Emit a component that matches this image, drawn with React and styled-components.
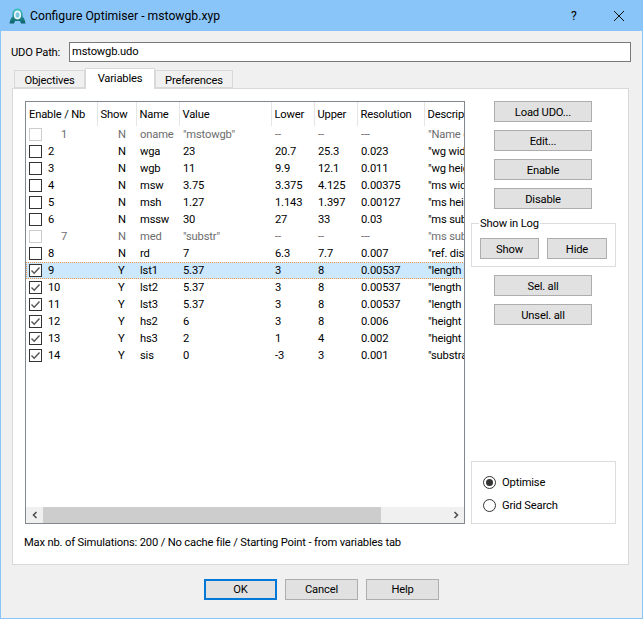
import React from "react";
import styled, { createGlobalStyle } from "styled-components";

const rows = [
  { nb: 1, off: true, show: "N", name: "oname", value: '"mstowgb"', lower: "--", upper: "--", res: "---", desc: '"Name of the model"' },
  { nb: 2, show: "N", name: "wga", value: "23", lower: "20.7", upper: "25.3", res: "0.023", desc: '"wg width port 1"' },
  { nb: 3, show: "N", name: "wgb", value: "11", lower: "9.9", upper: "12.1", res: "0.011", desc: '"wg height port 1"' },
  { nb: 4, show: "N", name: "msw", value: "3.75", lower: "3.375", upper: "4.125", res: "0.00375", desc: '"ms width"' },
  { nb: 5, show: "N", name: "msh", value: "1.27", lower: "1.143", upper: "1.397", res: "0.00127", desc: '"ms height"' },
  { nb: 6, show: "N", name: "mssw", value: "30", lower: "27", upper: "33", res: "0.03", desc: '"ms substrate width"' },
  { nb: 7, off: true, show: "N", name: "med", value: '"substr"', lower: "--", upper: "--", res: "---", desc: '"ms substrate"' },
  { nb: 8, show: "N", name: "rd", value: "7", lower: "6.3", upper: "7.7", res: "0.007", desc: '"ref. distance"' },
  { nb: 9, checked: true, selected: true, show: "Y", name: "lst1", value: "5.37", lower: "3", upper: "8", res: "0.00537", desc: '"length section 1"' },
  { nb: 10, checked: true, show: "Y", name: "lst2", value: "5.37", lower: "3", upper: "8", res: "0.00537", desc: '"length section 2"' },
  { nb: 11, checked: true, show: "Y", name: "lst3", value: "5.37", lower: "3", upper: "8", res: "0.00537", desc: '"length section 3"' },
  { nb: 12, checked: true, show: "Y", name: "hs2", value: "6", lower: "3", upper: "8", res: "0.006", desc: '"height step 2"' },
  { nb: 13, checked: true, show: "Y", name: "hs3", value: "2", lower: "1", upper: "4", res: "0.002", desc: '"height step 3"' },
  { nb: 14, checked: true, show: "Y", name: "sis", value: "0", lower: "-3", upper: "3", res: "0.001", desc: '"substrate in step"' },
];

const GlobalStyle = createGlobalStyle`
  html, body { margin: 0; padding: 0; background: #f0f0f0; }
  * { box-sizing: border-box; }
`;

const Dialog = styled.div`
  width: 643px;
  height: 619px;
  display: flex;
  flex-direction: column;
  background: #f0f0f0;
  border: 1px solid #8ac5fa;
  border-top: 0;
  font-family: Roboto, "Open Sans", sans-serif;
  font-size: 11.2px;
  letter-spacing: -0.17px;
  color: #000;
  overflow: hidden;
`;

const TitleBar = styled.div`
  height: 31px;
  flex: none;
  margin: 0 -1px;
  padding: 0 0 0 9px;
  display: flex;
  align-items: center;
  background: #8ac5fa;
  font-size: 12.2px;
  letter-spacing: 0;
`;

const TitleText = styled.span`
  margin-left: 4px;
  flex: 1;
`;

const TitleButton = styled.div`
  width: 46px;
  height: 31px;
  display: flex;
  align-items: center;
  justify-content: center;
`;

const CloseButton = styled(TitleButton)`
  padding-right: 2px;
`;

const PathRow = styled.div`
  display: flex;
  align-items: center;
  margin: 11px 11px 0 10px;
`;

const PathLabel = styled.span`
  width: 58px;
`;

const PathInput = styled.div`
  flex: 1;
  height: 20px;
  border: 1px solid #7a7a7a;
  background: #fff;
  padding-left: 2px;
  line-height: 18px;
`;

const TabBar = styled.div`
  display: flex;
  align-items: flex-end;
  height: 20px;
  margin: 6px 0 0 13px;
  position: relative;
  z-index: 1;
`;

const Tab = styled.div`
  height: ${(p) => (p.$active ? "21px" : "18px")};
  width: ${(p) => p.$w}px;
  margin-bottom: ${(p) => (p.$active ? "-1px" : "0")};
  border: 1px solid #d9d9d9;
  border-bottom: ${(p) => (p.$active ? "0" : "1px solid #d9d9d9")};
  background: ${(p) => (p.$active ? "#fff" : "#f0f0f0")};
  text-align: center;
  line-height: ${(p) => (p.$active ? "20px" : "19px")};
`;

const Panel = styled.div`
  flex: none;
  width: 617px;
  height: 477px;
  margin-left: 11px;
  background: #fff;
  border: 1px solid #d9d9d9;
  padding: 12px 11px 0 12px;
  display: grid;
  grid-template-columns: 440px 1fr;
  grid-template-rows: 423px 1fr;
`;

const ListBox = styled.div`
  border: 1px solid #828790;
  display: flex;
  flex-direction: column;
  overflow: hidden;
`;

const ListViewport = styled.div`
  flex: 1;
  overflow: hidden;
`;

const Table = styled.table`
  width: 523px;
  table-layout: fixed;
  border-collapse: collapse;
  font-size: 11.2px;
`;

const HeadCell = styled.th`
  height: 24px;
  padding: 0 0 0 3px;
  font-weight: 400;
  text-align: left;
  white-space: nowrap;
  overflow: hidden;
  border-right: 1px solid #e5e5e5;
  &:last-child { border-right: 0; }
`;

const dotsX = "repeating-linear-gradient(90deg, #f0954a 0 1px, transparent 1px 2px)";

const Row = styled.tr`
  height: 17px;
  background-color: ${(p) => (p.$selected ? "#cce8ff" : "transparent")};
  background-image: ${(p) => (p.$selected ? `${dotsX}, ${dotsX}` : "none")};
  background-size: 100% 1px;
  background-position: 0 0, 0 100%;
  background-repeat: no-repeat;
  color: ${(p) => (p.$off ? "#6d6d6d" : "#000")};
`;

const Cell = styled.td`
  height: 17px;
  padding: 0 0 0 ${(p) => p.$pad ?? 4}px;
  line-height: 15px;
  white-space: nowrap;
  overflow: hidden;
`;

const CheckCell = styled.div`
  display: flex;
  align-items: center;
  height: 17px;
  padding-left: 3px;
  border-left: ${(p) => (p.$selected ? "1px dotted #f0954a" : "0")};
`;

const CheckBox = styled.span`
  width: 13px;
  height: 13px;
  flex: none;
  display: flex;
  margin-left: ${(p) => (p.$selected ? "-1px" : "0")};
  border: 1px solid ${(p) => (p.$off ? "#cccccc" : "#333333")};
  background: #fff;
`;

const Nb = styled.span`
  margin-left: ${(p) => (p.$off ? "19px" : "6px")};
`;

const ScrollBar = styled.div`
  height: 16px;
  flex: none;
  display: flex;
  background: #f0f0f0;
`;

const ScrollArrow = styled.div`
  width: 17px;
  display: flex;
  align-items: center;
  justify-content: center;
`;

const ScrollTrack = styled.div`
  flex: 1;
`;

const ScrollThumb = styled.div`
  width: 338px;
  height: 100%;
  background: #cdcdcd;
`;

const SideColumn = styled.div`
  display: flex;
  flex-direction: column;
  padding-left: 6px;
  height: 423px;
`;

const Button = styled.div`
  width: ${(p) => p.$w || 98}px;
  height: 21px;
  flex: none;
  border: 1px solid #adadad;
  background: #e1e1e1;
  text-align: center;
  line-height: 21px;
  margin-left: ${(p) => p.$ml ?? 23}px;
  margin-bottom: 8px;
`;

const LogGroup = styled.div`
  position: relative;
  width: 145px;
  height: 44px;
  margin: 6px 0 8px;
  border: 1px solid #dcdcdc;
  display: flex;
  gap: 8px;
  padding: 14px 0 0 8px;
`;

const GroupTitle = styled.span`
  position: absolute;
  left: 7px;
  top: -7px;
  padding: 0 1px;
  background: #fff;
`;

const RadioGroup = styled.div`
  width: 145px;
  height: 63px;
  margin-top: auto;
  border: 1px solid #dcdcdc;
  display: flex;
  flex-direction: column;
  gap: 10px;
  padding: 14px 0 0 11px;
`;

const RadioRow = styled.div`
  display: flex;
  align-items: center;
  height: 13px;
  gap: 6px;
`;

const Status = styled.div`
  grid-column: 1 / 3;
  padding: 12px 0 0 0;
  margin-left: -1px;
`;

const Footer = styled.div`
  display: flex;
  justify-content: flex-start;
  gap: 8px;
  padding: 14px 0 0 203px;
`;

const FooterButton = styled.div`
  width: 73px;
  height: 21px;
  border: ${(p) => (p.$primary ? "2px solid #0078d7" : "1px solid #adadad")};
  background: #e1e1e1;
  text-align: center;
  line-height: ${(p) => (p.$primary ? "18px" : "20px")};
`;

const Check = () => (
  <svg width="11" height="11" viewBox="0 0 11 11">
    <path d="M1.5 5.5 L4.2 8.2 L9.5 2.5" fill="none" stroke="#555" strokeWidth="1.4" />
  </svg>
);

const Chevron = ({ left }) => (
  <svg width="8" height="8" viewBox="0 0 8 8">
    <path d={left ? "M5.5 1 L2.5 4 L5.5 7" : "M2.5 1 L5.5 4 L2.5 7"} fill="none" stroke="#505050" strokeWidth="1.6" />
  </svg>
);

const Radio = ({ on }) => (
  <svg width="13" height="13" viewBox="0 0 13 13">
    <circle cx="6.5" cy="6.5" r="6" fill="#fff" stroke="#333" />
    {on && <circle cx="6.5" cy="6.5" r="3.5" fill="#333" />}
  </svg>
);

const AppIcon = () => (
  <svg width="17" height="16" viewBox="0 0 17 16">
    <defs>
      <linearGradient id="appicon" x1="0" y1="0" x2="0" y2="1">
        <stop offset="0" stopColor="#3fc4c4" />
        <stop offset="1" stopColor="#0b5f68" />
      </linearGradient>
    </defs>
    <path d="M0.5 15.5 C1 12 2 10 3.5 8.5 L3.5 6 C3.5 2.5 6 0.5 8.5 0.5 C11 0.5 13.5 2.5 13.5 6 L13.5 8.5 C15 10 16 12 16.5 15.5 L12 15.5 L11 13 L6 13 L5 15.5 Z" fill="url(#appicon)" />
    <ellipse cx="8.5" cy="7" rx="3.6" ry="4.4" fill="#eef9fb" />
    <ellipse cx="8.5" cy="7" rx="2" ry="2.8" fill="#7cc4e0" />
  </svg>
);

const columns = [71, 39, 43, 92, 43, 43, 67, 125];
const heads = ["Enable / Nb", "Show", "Name", "Value", "Lower", "Upper", "Resolution", "Description"];

const App = () => (
  <>
    <GlobalStyle />
    <Dialog>
      <TitleBar>
        <AppIcon />
        <TitleText>Configure Optimiser - mstowgb.xyp</TitleText>
        <TitleButton>?</TitleButton>
        <CloseButton>
          <svg width="10" height="10" viewBox="0 0 10 10">
            <path d="M0 0 L10 10 M10 0 L0 10" stroke="#111" strokeWidth="1" />
          </svg>
        </CloseButton>
      </TitleBar>

      <PathRow>
        <PathLabel>UDO Path:</PathLabel>
        <PathInput>mstowgb.udo</PathInput>
      </PathRow>

      <TabBar>
        <Tab $w={71}>Objectives</Tab>
        <Tab $w={70} $active>Variables</Tab>
        <Tab $w={78}>Preferences</Tab>
      </TabBar>

      <Panel>
        <ListBox>
          <ListViewport>
            <Table>
              <colgroup>
                {columns.map((w, i) => (
                  <col key={i} style={{ width: w }} />
                ))}
              </colgroup>
              <thead>
                <tr>
                  {heads.map((h) => (
                    <HeadCell key={h}>{h}</HeadCell>
                  ))}
                </tr>
              </thead>
              <tbody>
                {rows.map((r) => (
                  <Row key={r.nb} $off={r.off} $selected={r.selected}>
                    <Cell $pad={0}>
                      <CheckCell $selected={r.selected}>
                        <CheckBox $off={r.off} $selected={r.selected}>{r.checked && <Check />}</CheckBox>
                        <Nb $off={r.off}>{r.nb}</Nb>
                      </CheckCell>
                    </Cell>
                    <Cell $pad={21}>{r.show}</Cell>
                    <Cell>{r.name}</Cell>
                    <Cell>{r.value}</Cell>
                    <Cell>{r.lower}</Cell>
                    <Cell>{r.upper}</Cell>
                    <Cell>{r.res}</Cell>
                    <Cell>{r.desc}</Cell>
                  </Row>
                ))}
              </tbody>
            </Table>
          </ListViewport>
          <ScrollBar>
            <ScrollArrow><Chevron left /></ScrollArrow>
            <ScrollTrack><ScrollThumb /></ScrollTrack>
            <ScrollArrow><Chevron /></ScrollArrow>
          </ScrollBar>
        </ListBox>

        <SideColumn>
          <Button>Load UDO...</Button>
          <Button>Edit...</Button>
          <Button>Enable</Button>
          <Button>Disable</Button>
          <LogGroup>
            <GroupTitle>Show in Log</GroupTitle>
            <Button $w={59} $ml={0}>Show</Button>
            <Button $w={60} $ml={0}>Hide</Button>
          </LogGroup>
          <Button>Sel. all</Button>
          <Button>Unsel. all</Button>
          <RadioGroup>
            <RadioRow><Radio on />Optimise</RadioRow>
            <RadioRow><Radio />Grid Search</RadioRow>
          </RadioGroup>
        </SideColumn>

        <Status>Max nb. of Simulations: 200 / No cache file / Starting Point - from variables tab</Status>
      </Panel>

      <Footer>
        <FooterButton $primary>OK</FooterButton>
        <FooterButton>Cancel</FooterButton>
        <FooterButton>Help</FooterButton>
      </Footer>
    </Dialog>
  </>
);

export default App;
